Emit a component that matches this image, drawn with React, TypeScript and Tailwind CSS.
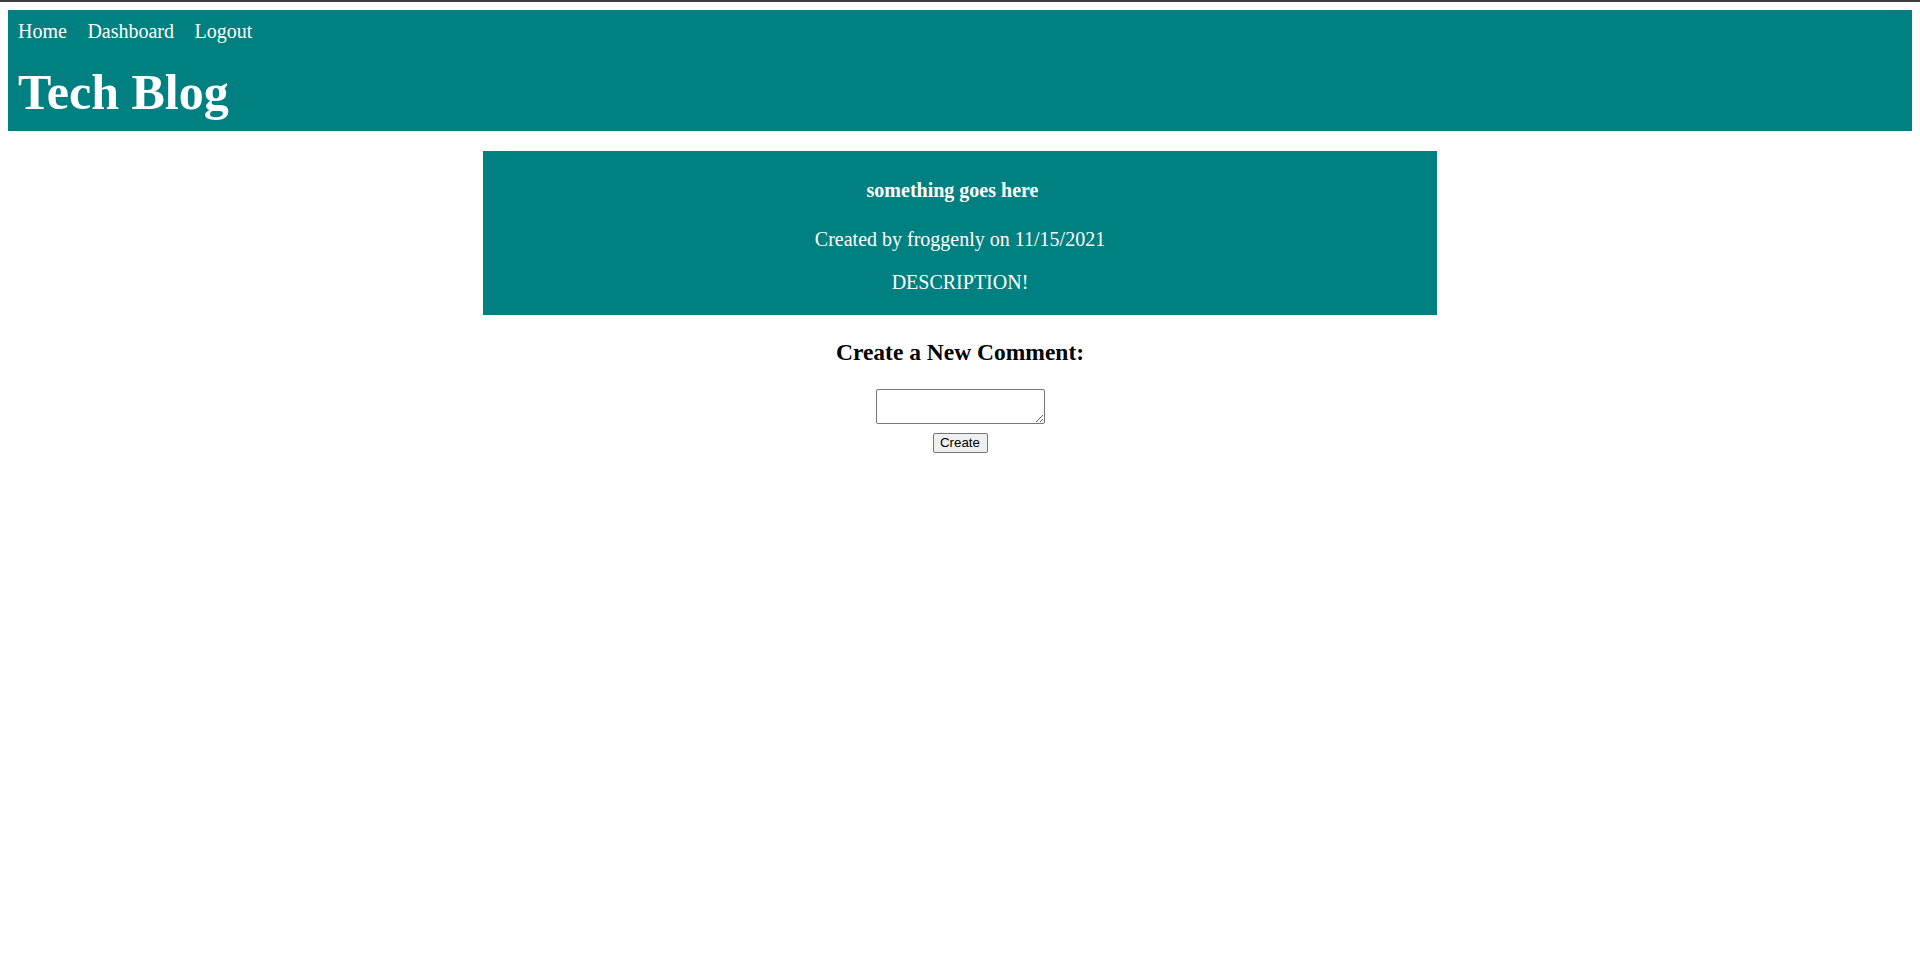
import React from "react";

export default function App() {
  return (
    <div className="min-h-[968px] bg-white" style={{ fontFamily: '"Liberation Serif", "Times New Roman", serif' }}>
      <div className="h-[2px] bg-[#3c4043]" />
      <header className="mx-[8px] mt-[8px] h-[121px] bg-[#008080] px-[10px] pt-[10px] text-white">
        <nav className="flex gap-[20.5px] text-[20px] leading-[22px]">
          <a className="cursor-pointer">Home</a>
          <a className="cursor-pointer">Dashboard</a>
          <a className="cursor-pointer">Logout</a>
        </nav>
        <h1 className="mt-[23.5px] text-[50px] font-bold leading-[53px]">Tech Blog</h1>
      </header>

      <main className="flex flex-col items-center">
        <section className="mt-[20px] flex w-[954px] flex-col items-center bg-[#008080] pt-[27.5px] pb-[21px] text-white">
          <h3 className="pr-[15px] text-[20px] font-bold leading-[23px]">something goes here</h3>
          <p className="mt-[26px] text-[20px] leading-[23px]">Created by froggenly on 11/15/2021</p>
          <p className="mt-[20px] text-[20px] leading-[23px]">DESCRIPTION!</p>
        </section>

        <h2 className="mt-[23px] text-[23.5px] font-bold leading-[28px] text-black">Create a New Comment:</h2>
        <form className="mt-[23px] flex flex-col items-center">
          <textarea className="h-[35px] w-[169px] resize rounded-[2px] border border-[#767676] bg-white" />
          <button
            type="button"
            className="mt-[9px] h-[20px] w-[55px] rounded-[2px] border border-[#767676] bg-[#efefef] text-[13.33px] leading-[18px] text-black"
            style={{ fontFamily: '"Liberation Sans", Arial, sans-serif' }}
          >
            Create
          </button>
        </form>
      </main>
    </div>
  );
}
